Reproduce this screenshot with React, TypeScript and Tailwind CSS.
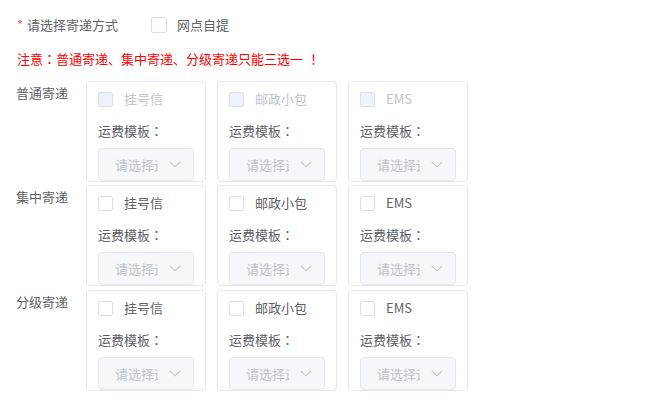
import React from 'react';

const font = 'font-["Noto_Sans_CJK_SC","Noto_Sans",sans-serif]';

// fullwidth punctuation centred in its cell, as in the reference
const Punct: React.FC<{ children: React.ReactNode }> = ({ children }) => (
  <span className='font-["Noto_Sans_CJK_JP",sans-serif]'>{children}</span>
);

interface BoxProps {
  disabled?: boolean;
  size?: 'sm' | 'md';
}

const CheckBox: React.FC<BoxProps> = ({ disabled, size = 'sm' }) => (
  <span
    className={`inline-block shrink-0 rounded-[2px] border border-[#dcdfe6] ${
      size === 'md' ? 'h-[16px] w-[16px]' : 'h-[15px] w-[15px]'
    } ${disabled ? 'bg-[#edf2fc]' : 'bg-white'}`}
  />
);

const TemplateSelect: React.FC = () => (
  <div className="flex h-[33px] w-full items-center rounded-[4px] border border-[#e4e7ed] bg-[#f5f7fa] pl-[16px] pr-[12px]">
    <span className="w-[43px] overflow-hidden whitespace-nowrap text-[13px] leading-[18px] text-[#c0c4cc]">
      请选择运费模板
    </span>
    <svg className="ml-auto" width="12" height="7" viewBox="0 0 12 7" fill="none">
      <path d="M0.8 0.8 L6 5.8 L11.2 0.8" stroke="#c0c4cc" strokeWidth="1.1" />
    </svg>
  </div>
);

interface CardProps {
  name: string;
  disabled?: boolean;
}

const MethodCard: React.FC<CardProps> = ({ name, disabled }) => (
  <div className="h-[101px] w-[120px] rounded-[4px] border border-[#e4e7ed] bg-white px-[11px] pt-[7px]">
    <div className="flex h-[20px] items-center">
      <CheckBox disabled={disabled} />
      <span
        className={`ml-[11px] text-[13px] leading-[18px] ${
          disabled ? 'text-[#c0c4cc]' : 'text-[#606266]'
        }`}
      >
        {name}
      </span>
    </div>
    <div className="mt-[12px] h-[20px] text-[13px] leading-[20px] text-[#606266]">
      运费模板<Punct>：</Punct>
    </div>
    <div className="mt-[7px]">
      <TemplateSelect />
    </div>
  </div>
);

const rows = [
  { label: '普通寄递', disabled: true, spacing: '' },
  { label: '集中寄递', disabled: false, spacing: 'mt-[3px]' },
  { label: '分级寄递', disabled: false, spacing: 'mt-[4px]' },
];

const methods = ['挂号信', '邮政小包', 'EMS'];

export default function App() {
  return (
    <div className={`min-h-[409px] w-[650px] bg-white pl-[16px] pt-[15px] ${font}`}>
      <div className="flex h-[20px] items-center text-[13px] leading-[18px]">
        <span className="ml-[1px] mr-[4px] text-[#f56c6c]">*</span>
        <span className="text-[#606266]">请选择寄递方式</span>
        <label className="ml-[33px] flex items-center">
          <CheckBox size="md" />
          <span className="ml-[10px] text-[#606266]">网点自提</span>
        </label>
      </div>

      <div className="ml-[1px] mt-[15px] text-[13px] leading-[18px] text-[#ff0000]">
        注意<Punct>：</Punct>普通寄递、集中寄递、分级寄递只能三选一<span className="ml-[4px]"><Punct>！</Punct></span>
      </div>

      <div className="mt-[13px] flex flex-col">
        {rows.map((row) => (
          <div key={row.label} className={`flex ${row.spacing}`}>
            <div className="w-[70px] pt-[3px] text-[13px] leading-[18px] text-[#606266]">{row.label}</div>
            <div className="flex gap-[11px]">
              {methods.map((m) => (
                <MethodCard key={m} name={m} disabled={row.disabled} />
              ))}
            </div>
          </div>
        ))}
      </div>
    </div>
  );
}
